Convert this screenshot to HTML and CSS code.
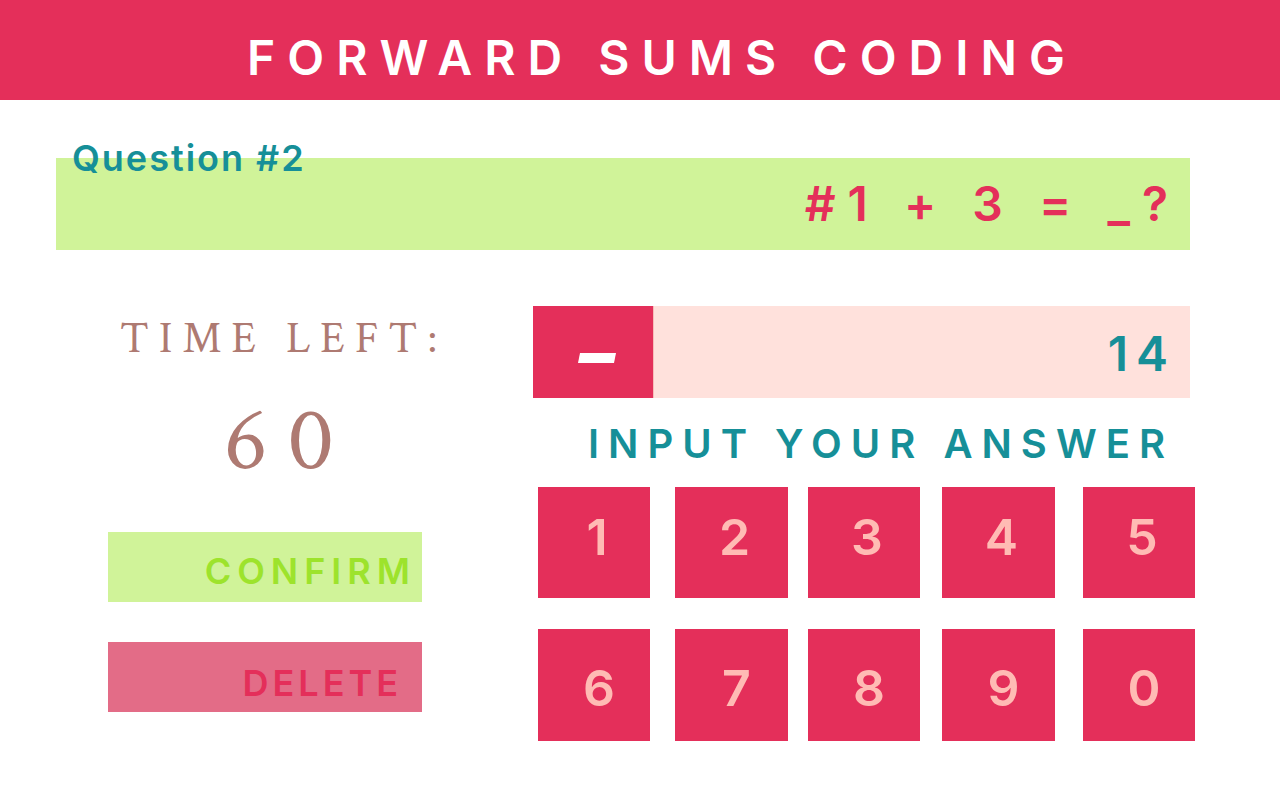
FILE: index.html
```html
<!DOCTYPE html>
<html lang="en">
<head>
  <meta charset="utf-8">
  <meta name="viewport" content="width=device-width, initial-scale=1">
  <title>Forward Sums Coding</title>
  <link rel="stylesheet" href="styles.css">
</head>
<body>
  <header class="banner">
    <h1 class="banner-title">FORWARD SUMS CODING</h1>
  </header>
  <main class="game">
    <section class="question">
      <h2 class="question-label">Question #2</h2>
      <p class="equation">#1 + 3 = _?</p>
    </section>
    <div class="board">
      <section class="side">
        <h2 class="time-label">TIME LEFT:</h2>
        <p class="time-value">60</p>
        <div class="actions">
          <button class="action confirm" type="button">CONFIRM</button>
          <button class="action delete" type="button">DELETE</button>
        </div>
      </section>
      <section class="entry">
        <div class="answer">
          <button class="sign" type="button" aria-label="Toggle minus sign">
            <svg class="sign-icon" viewBox="0 0 38 10" width="38" height="10" aria-hidden="true"><path d="M2 0H38L36 10H0Z" fill="currentColor"/></svg>
          </button>
          <input class="answer-input" id="answer" type="text" inputmode="numeric" value="14">
        </div>
        <label class="answer-label" for="answer">INPUT YOUR ANSWER</label>
        <div class="keypad">
          <button class="key" type="button">1</button>
          <button class="key" type="button">2</button>
          <button class="key" type="button">3</button>
          <button class="key" type="button">4</button>
          <button class="key" type="button">5</button>
          <button class="key" type="button">6</button>
          <button class="key" type="button">7</button>
          <button class="key" type="button">8</button>
          <button class="key" type="button">9</button>
          <button class="key" type="button">0</button>
        </div>
      </section>
    </div>
  </main>
</body>
</html>
```
FILE: styles.css
```css
* {
  box-sizing: border-box;
}

body {
  margin: 0;
  background: #fff;
  font-family: Inter, "Liberation Sans", sans-serif;
  font-weight: 600;
}

h1, h2, p {
  margin: 0;
}

button, input {
  border: 0;
  border-radius: 0;
  font: inherit;
}

.banner {
  display: flex;
  align-items: center;
  justify-content: center;
  padding: 23px 0 7px 44px;
  background: #e42f5a;
}

.banner-title {
  color: #fff;
  font-size: 48px;
  font-weight: 600;
  line-height: 70px;
  letter-spacing: 12px;
  white-space: nowrap;
}

.game {
  padding: 58px 90px 56px 56px;
}

.question {
  position: relative;
  padding: 16px 10px 16px 0;
  background: #d0f399;
}

.question-label {
  position: absolute;
  top: -20px;
  left: 16px;
  color: #168f98;
  font-size: 36px;
  font-weight: 600;
  line-height: 40px;
  letter-spacing: 2px;
}

.equation {
  color: #e42f5a;
  font-size: 48px;
  line-height: 60px;
  letter-spacing: 12px;
  text-align: right;
}

.board {
  display: grid;
  grid-template-columns: minmax(0, 314fr) minmax(0, 657fr);
  column-gap: 111px;
  padding: 56px 0 0 52px;
}

.time-label, .time-value {
  color: #ae7a72;
  font-family: "Crimson Text", "Liberation Serif", serif;
  font-weight: 400;
}

.time-label {
  padding: 1px 0 0 12px;
  font-size: 44px;
  line-height: 64px;
  letter-spacing: 10px;
  white-space: nowrap;
}

.time-value {
  padding: 6px 0 25px 48px;
  font-size: 92px;
  line-height: 130px;
  letter-spacing: 20px;
  text-align: center;
}

.actions {
  display: grid;
  row-gap: 40px;
}

.action {
  height: 70px;
  font-size: 36px;
  text-align: right;
}

.confirm {
  padding: 8px 6px 0 0;
  background: #d0f399;
  color: #9de32c;
  letter-spacing: 6px;
}

.delete {
  padding: 12px 20px 0 0;
  background: #e36c87;
  color: #e42f5a;
  letter-spacing: 4px;
}

.answer {
  display: flex;
  height: 92px;
}

.sign {
  display: flex;
  align-items: center;
  justify-content: center;
  flex: 0 0 120px;
  padding: 12px 0 0 8px;
  background: #e42f5a;
  color: #fff;
}

.answer-input {
  flex: 1;
  min-width: 0;
  padding: 2px 14px 0 0;
  border-left: 1px solid #f6bdb9;
  background: #ffe1dc;
  color: #168f98;
  font-size: 48px;
  letter-spacing: 8px;
  text-align: right;
}

.answer-label {
  display: block;
  padding: 2px 16px 0 0;
  color: #168f98;
  font-size: 40px;
  line-height: 87px;
  letter-spacing: 9px;
  text-align: right;
  white-space: nowrap;
}

.keypad {
  display: grid;
  grid-template-columns:
    minmax(0, 112fr) minmax(0, 25fr) minmax(0, 113fr) minmax(0, 20fr)
    minmax(0, 112fr) minmax(0, 22fr) minmax(0, 113fr) minmax(0, 28fr)
    minmax(0, 112fr);
  grid-template-rows: 111px 112px;
  row-gap: 31px;
  margin: 0 -5px 0 5px;
}

.key {
  padding: 0 0 12px 6px;
  background: #e42f5a;
  color: #ffbbb4;
  font-size: 50px;
}

.key:nth-child(5n + 1) { grid-column: 1; }
.key:nth-child(5n + 2) { grid-column: 3; }
.key:nth-child(5n + 3) { grid-column: 5; }
.key:nth-child(5n + 4) { grid-column: 7; }
.key:nth-child(5n + 5) { grid-column: 9; }

.key:nth-child(n + 6) {
  padding: 6px 0 0 10px;
}
```
